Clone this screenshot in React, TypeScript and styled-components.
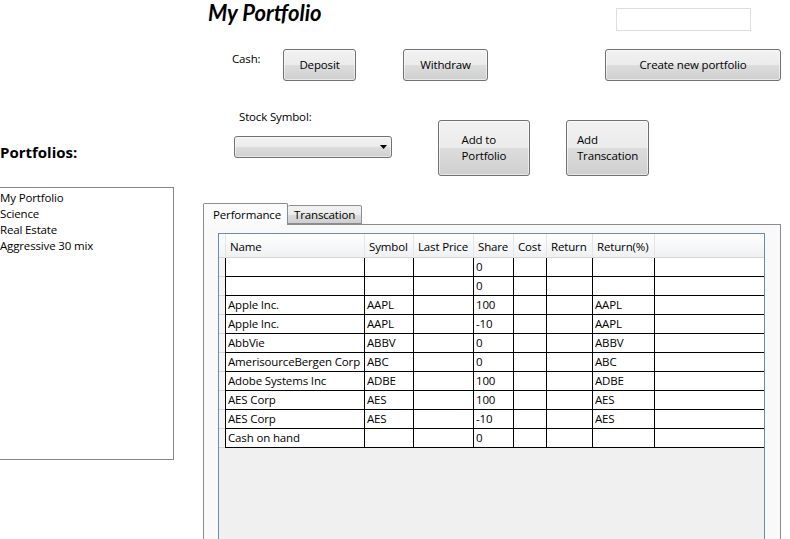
import React from "react";
import styled, { createGlobalStyle } from "styled-components";

const GlobalStyle = createGlobalStyle`
  html, body { margin: 0; padding: 0; background: #fff; }
  body {
    font-family: "Open Sans", "Noto Sans", sans-serif;
    font-size: 11.5px;
    letter-spacing: -0.15px;
    color: #000;
  }
  * { box-sizing: border-box; }
`;

const Page = styled.div`
  display: flex;
  width: 790px;
  height: 539px;
  overflow: hidden;
  background: #fff;
`;

const LeftPane = styled.aside`
  width: 174px;
  flex-shrink: 0;
  display: flex;
  flex-direction: column;
  padding-top: 142px;
`;

const SectionHeading = styled.h2`
  margin: 0;
  height: 45px;
  flex-shrink: 0;
  font-size: 15px;
  font-weight: 700;
  line-height: 20px;
  letter-spacing: 0;
`;

const ListBox = styled.ul`
  list-style: none;
  margin: 0 0 0 -3px;
  width: 177px;
  height: 273px;
  flex-shrink: 0;
  padding: 2px 0 0 2px;
  border: 1px solid #828790;
  background: #fff;
`;

const ListItem = styled.li`
  line-height: 16px;
  white-space: nowrap;
`;

const RightPane = styled.main`
  flex: 1;
  display: flex;
  flex-direction: column;
  padding-left: 29px;
  min-width: 0;
`;

const TitleRow = styled.div`
  display: flex;
  align-items: flex-start;
  height: 49px;
  flex-shrink: 0;
`;

const Title = styled.h1`
  margin: 0 0 0 5px;
  font-family: Lato, "Open Sans", sans-serif;
  font-size: 22px;
  font-style: italic;
  font-weight: 700;
  line-height: 26px;
  letter-spacing: 0;
`;

const SearchBox = styled.input`
  margin: 8px 39px 0 auto;
  width: 135px;
  height: 23px;
  border: 1px solid #dadfe5;
  background: #fff;
  outline: none;
`;

const ButtonRow = styled.div`
  display: flex;
  align-items: flex-start;
  height: 32px;
  flex-shrink: 0;
`;

const FieldLabel = styled.span<{ $w?: number; $pl: number; $mt: number }>`
  display: block;
  ${(p) => (p.$w ? `width: ${p.$w}px;` : "")}
  padding-left: ${(p) => p.$pl}px;
  margin-top: ${(p) => p.$mt}px;
  line-height: 16px;
  flex-shrink: 0;
`;

const Button = styled.button<{ $w: number; $h: number; $ml?: number; $mt?: number }>`
  flex-shrink: 0;
  width: ${(p) => p.$w}px;
  height: ${(p) => p.$h}px;
  margin-left: ${(p) => p.$ml ?? 0}px;
  margin-top: ${(p) => p.$mt ?? 0}px;
  padding: 0;
  border: 1px solid #707070;
  border-radius: 3px;
  background: linear-gradient(#f2f2f2 0%, #ebebeb 50%, #dddddd 50%, #cfcfcf 100%);
  box-shadow: inset 0 0 0 1px rgba(255, 255, 255, 0.55);
  font: inherit;
  letter-spacing: inherit;
  color: #000;
  text-align: center;
  line-height: 16px;
`;

const ButtonText = styled.span`
  display: inline-block;
  text-align: left;
`;

const ActionRow = styled.div`
  display: flex;
  align-items: flex-start;
  height: 68px;
  flex-shrink: 0;
  margin-top: 27px;
`;

const SymbolGroup = styled.div`
  width: 235px;
  flex-shrink: 0;
  display: flex;
  flex-direction: column;
`;

const ComboBox = styled.div`
  margin: 11px 0 0 31px;
  width: 158px;
  height: 22px;
  border: 1px solid #707070;
  border-radius: 3px;
  background: linear-gradient(#f2f2f2 0%, #ebebeb 50%, #dddddd 50%, #cfcfcf 100%);
  box-shadow: inset 0 0 0 1px rgba(255, 255, 255, 0.55);
  display: flex;
  align-items: center;
  justify-content: flex-end;
  padding-right: 4px;
`;

const TabArea = styled.section`
  margin-top: 27px;
  width: 578px;
  height: 380px;
  flex-shrink: 0;
  display: flex;
  flex-direction: column;
`;

const TabStrip = styled.div`
  display: flex;
  align-items: flex-end;
  height: 22px;
  flex-shrink: 0;
  position: relative;
  z-index: 1;
  margin-bottom: -1px;
`;

const Tab = styled.div<{ $active?: boolean; $w: number }>`
  width: ${(p) => p.$w}px;
  height: ${(p) => (p.$active ? 22 : 19)}px;
  margin-bottom: ${(p) => (p.$active ? 0 : 1)}px;
  padding-left: ${(p) => (p.$active ? 9 : 6)}px;
  border: 1px solid #898c95;
  border-bottom: ${(p) => (p.$active ? "none" : "1px solid #898c95")};
  ${(p) => (p.$active ? "" : "border-left: none;")}
  border-radius: 2px 2px 0 0;
  background: ${(p) =>
    p.$active ? "#fbfbfb" : "linear-gradient(#f2f2f2 0%, #ebebeb 50%, #dddddd 50%, #cfcfcf 100%)"};
  line-height: ${(p) => (p.$active ? 21 : 17)}px;
  white-space: nowrap;
`;

const TabPanel = styled.div`
  flex: 1;
  border: 1px solid #898c95;
  background: #f9f9f9;
  padding: 8px 15px 0 14px;
  display: flex;
  flex-direction: column;
  min-height: 0;
`;

const DataGrid = styled.div`
  flex: 1;
  border: 1px solid #688caf;
  border-bottom: none;
  background: #f0f0f0;
`;

const COLUMNS = "139px 49px 60px 40px 33px 46px 62px 1fr";

const Row = styled.div`
  display: flex;
`;

const RowHeader = styled.div<{ $header?: boolean }>`
  width: 6px;
  flex-shrink: 0;
  background: ${(p) => (p.$header ? "linear-gradient(#ffffff, #f1f2f4)" : "#f4f4f4")};
  border-bottom: 1px solid #d5d5d5;
`;

const HeaderCells = styled.div`
  flex: 1;
  display: grid;
  grid-template-columns: ${COLUMNS};
  height: 24px;
  border-left: 1px solid #e3e5e8;
  border-bottom: 1px solid #d5d5d5;
  background: linear-gradient(#ffffff 0%, #f7f8f9 50%, #eef0f2 100%);
`;

const HeaderCell = styled.div<{ $last?: boolean }>`
  padding: 2px 0 0 4px;
  line-height: 21px;
  white-space: nowrap;
  overflow: hidden;
  border-right: ${(p) => (p.$last ? "none" : "1px solid #e3e5e8")};
`;

const DataCells = styled.div`
  flex: 1;
  display: grid;
  grid-template-columns: ${COLUMNS};
  height: 19px;
  border-left: 1px solid #000;
  border-bottom: 1px solid #000;
  background: #fff;
`;

const DataCell = styled.div<{ $last?: boolean }>`
  padding-left: 2px;
  line-height: 18px;
  white-space: nowrap;
  overflow: hidden;
  border-right: ${(p) => (p.$last ? "none" : "1px solid #000")};
`;

const headers = ["Name", "Symbol", "Last Price", "Share", "Cost", "Return", "Return(%)", ""];

const rows: string[][] = [
  ["", "", "", "0", "", "", ""],
  ["", "", "", "0", "", "", ""],
  ["Apple Inc.", "AAPL", "", "100", "", "", "AAPL"],
  ["Apple Inc.", "AAPL", "", "-10", "", "", "AAPL"],
  ["AbbVie", "ABBV", "", "0", "", "", "ABBV"],
  ["AmerisourceBergen Corp", "ABC", "", "0", "", "", "ABC"],
  ["Adobe Systems Inc", "ADBE", "", "100", "", "", "ADBE"],
  ["AES Corp", "AES", "", "100", "", "", "AES"],
  ["AES Corp", "AES", "", "-10", "", "", "AES"],
  ["Cash on hand", "", "", "0", "", "", ""],
];

const portfolios = ["My Portfolio", "Science", "Real Estate", "Aggressive 30 mix"];

export default function App() {
  return (
    <>
      <GlobalStyle />
      <Page>
        <LeftPane>
          <SectionHeading>Portfolios:</SectionHeading>
          <ListBox>
            {portfolios.map((p) => (
              <ListItem key={p}>{p}</ListItem>
            ))}
          </ListBox>
        </LeftPane>
        <RightPane>
          <TitleRow>
            <Title>My Portfolio</Title>
            <SearchBox />
          </TitleRow>
          <ButtonRow>
            <FieldLabel $w={80} $pl={29} $mt={2}>
              Cash:
            </FieldLabel>
            <Button $w={73} $h={32}>Deposit</Button>
            <Button $w={85} $h={32} $ml={47}>Withdraw</Button>
            <Button $w={176} $h={32} $ml={117}>Create new portfolio</Button>
          </ButtonRow>
          <ActionRow>
            <SymbolGroup>
              <FieldLabel $pl={36} $mt={1}>Stock Symbol:</FieldLabel>
              <ComboBox>
                <svg width="7" height="4" viewBox="0 0 7 4">
                  <path d="M0 0H7L3.5 4Z" fill="#000" />
                </svg>
              </ComboBox>
            </SymbolGroup>
            <Button $w={92} $h={56} $mt={12}>
              <ButtonText>
                Add to
                <br />
                Portfolio
              </ButtonText>
            </Button>
            <Button $w={83} $h={56} $ml={36} $mt={12}>
              <ButtonText>
                Add
                <br />
                Transcation
              </ButtonText>
            </Button>
          </ActionRow>
          <TabArea>
            <TabStrip>
              <Tab $active $w={85}>Performance</Tab>
              <Tab $w={74}>Transcation</Tab>
            </TabStrip>
            <TabPanel>
              <DataGrid>
                <Row>
                  <RowHeader $header />
                  <HeaderCells>
                    {headers.map((h, i) => (
                      <HeaderCell key={i} $last={i === headers.length - 1}>
                        {h}
                      </HeaderCell>
                    ))}
                  </HeaderCells>
                </Row>
                {rows.map((r, ri) => (
                  <Row key={ri}>
                    <RowHeader />
                    <DataCells>
                      {[...r, ""].map((c, ci) => (
                        <DataCell key={ci} $last={ci === r.length}>
                          {c}
                        </DataCell>
                      ))}
                    </DataCells>
                  </Row>
                ))}
              </DataGrid>
            </TabPanel>
          </TabArea>
        </RightPane>
      </Page>
    </>
  );
}
